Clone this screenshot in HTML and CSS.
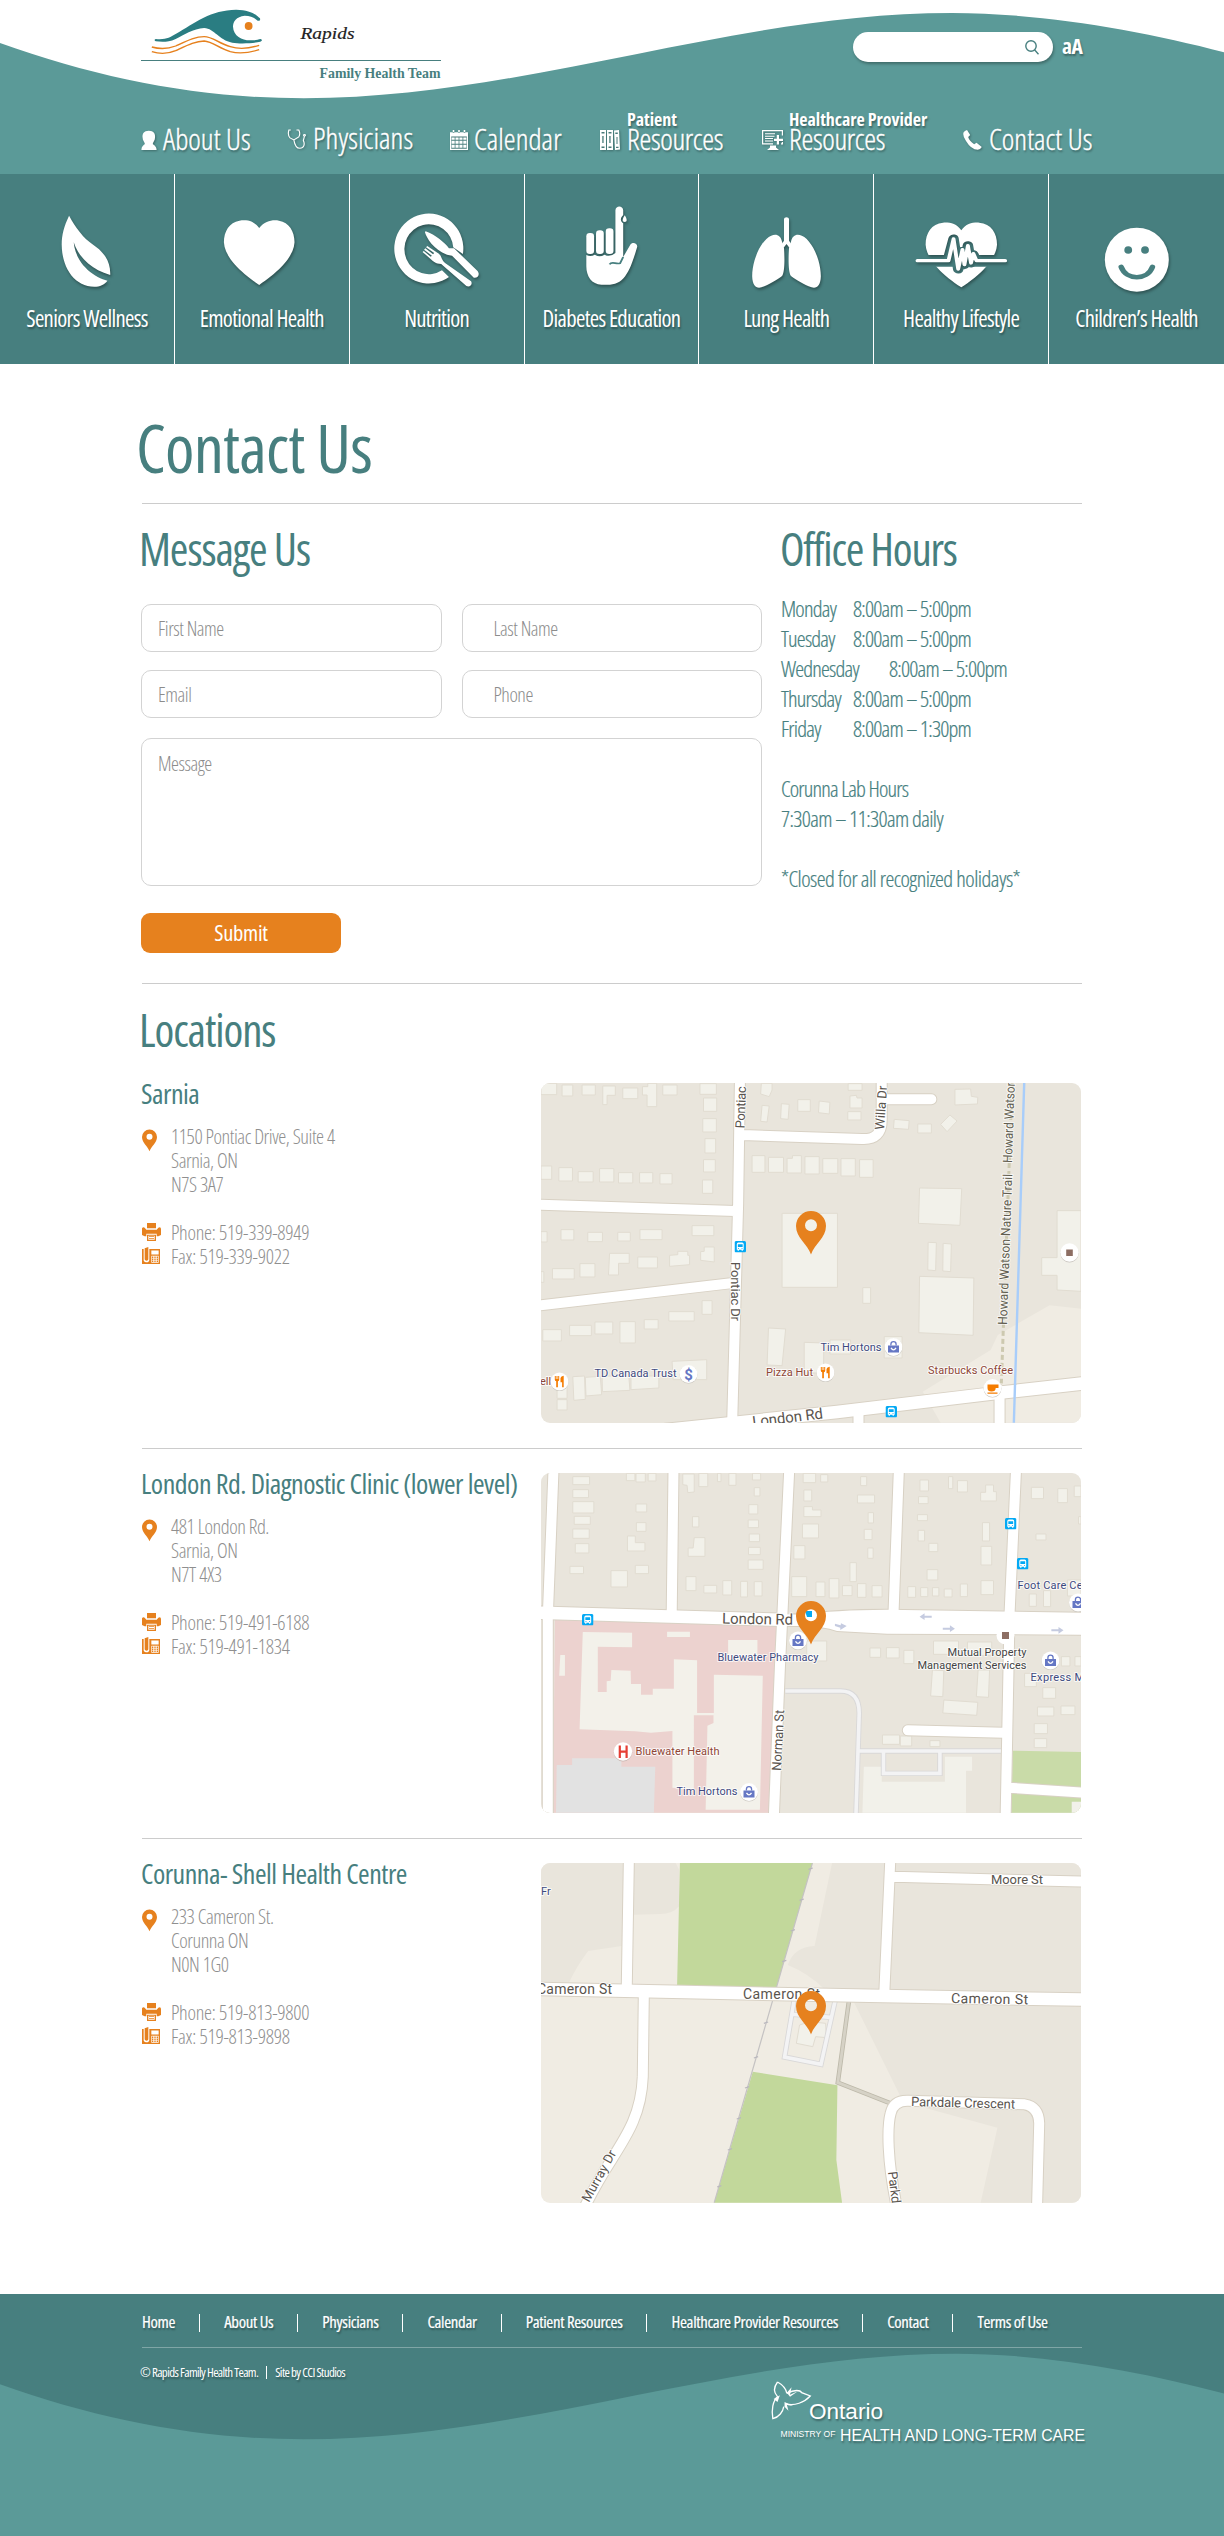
FILE: index.html
```
<!DOCTYPE html>
<html lang="en">
<head>
<meta charset="utf-8">
<title>Contact Us - Rapids Family Health Team</title>
<link rel="stylesheet" href="styles.css">
</head>
<body>
<svg class="defs" width="0" height="0" aria-hidden="true">
  <defs>
    <symbol id="pin" viewBox="0 0 30 44"><path fill-rule="evenodd" d="M15 43.500C11.500 33 0 27 0 15A15 15 0 0 1 30 15C30 27 18.500 33 15 43.500ZM15 8.300a6 6 0 1 0 0 12a6 6 0 1 0 0-12Z"/></symbol>
    <symbol id="printer" viewBox="0 0 57 54" preserveAspectRatio="none"><path d="M15 0h27v16H15zM0 16q3-5 8-2l5 6h31l5-6q8-3 8 4v18l-8 4h-5v-8H13v8H8l-8-4zM15 35h27v19H15zM19 38v12h19V38z" fill-rule="evenodd"/><path d="M21 40h15v2H21zM21 45h15v2H21z"/></symbol>
    <symbol id="fax" viewBox="0 0 54 50" preserveAspectRatio="none"><path fill-rule="evenodd" d="M0 6h5v34q2 6 8 5h4q4-1 5-6V6h32v44H0zM28 10v12h22V10zM28 26v20h22V26z"/><path d="M8 4l11-4v37q-5 7-11 0zM30 28h4v4h-4zM37 28h4v4h-4zM44 28h4v4h-4zM30 34h4v4h-4zM37 34h4v4h-4zM44 34h4v4h-4zM30 40h4v4h-4zM37 40h4v4h-4zM44 40h4v4h-4z"/></symbol>
    <symbol id="bus" viewBox="0 0 11 11"><rect width="11" height="11" rx="1.500" fill="#03a9f4"/><path fill="#fff" fill-rule="evenodd" d="M2.200 3q0-1.500 1.500-1.500h3.600q1.500 0 1.500 1.500v5.300h-.8v1H6.800v-1H4.200v1H3v-1h-.8zM3.200 3v2.700h4.600V3zM3.300 6.600v.9h1v-.9zM6.700 6.600v.9h1v-.9z"/></symbol>
    <symbol id="bag" viewBox="0 0 18 20"><circle cx="9" cy="10.600" r="9" fill="#c9c5be"/><circle cx="9" cy="10" r="9" fill="#fff"/><path d="M3.500 8.500h11v7h-11z" fill="#6577c4"/><path d="M6.400 8.500V7.300a2.600 2.600 0 0 1 5.200 0v1.200" fill="none" stroke="#6577c4" stroke-width="1.300"/><path d="M6.500 10.800q2.500 4 5 0" fill="none" stroke="#fff" stroke-width="1.300"/></symbol>
    <symbol id="food" viewBox="0 0 18 20"><circle cx="9" cy="10.600" r="9" fill="#c9c5be"/><circle cx="9" cy="10" r="9" fill="#fff"/><path d="M4.300 4.500h1v3h.7v-3h1v3h.7v-3h1v3.700q0 1.300-1.300 1.600v6H5.700v-6Q4.300 9.500 4.300 8.200zM10 6.500q.5-2 3.200-2.200v11.500h-1.600v-5H10z" fill="#f57c00"/></symbol>
  </defs>
</svg>

<header class="header">
  <svg class="header-wave" viewBox="0 0 1224 174" aria-hidden="true"><path d="M0 43C100 79 200 98.300 304 98.300C525 98.300 731 13 952 13C1040 13 1140 30 1224 52.300V174H0Z" fill="#5b9a98"/></svg>
  <div class="header-content">
    <div class="header-top">
      <svg class="logo" viewBox="141 0 300 86" role="img" aria-label="Rapids Family Health Team">
        <g transform="scale(.39032 .33333)">
          <path fill="#2a7d82" d="M399 117C425 120 435 112 450 102C500 68 540 30 605 29C640 30 655 42 666 55C668 61 664 64 660 62C650 52 642 47 627 47C605 50 597 65 597 80C598 108 620 121 640 121C655 121 660 119 668 117C672 119 672 124 667 125C650 130 615 132 595 128C560 120 550 86 523 84C495 86 470 105 450 117C430 128 412 126 399 124C395 122 395 118 399 117Z"/>
          <ellipse cx="637" cy="78" rx="10" ry="12" fill="#e6811e"/>
          <path fill="none" stroke="#e6811e" stroke-width="4" d="M389 141C410 148 430 147 450 138C480 122 500 110 523 110C545 110 560 130 590 140C615 149 640 145 664 136M389 155C410 163 430 162 450 152C480 136 500 124 523 123C545 125 560 144 590 155C615 163 640 158 664 149"/>
        </g>
        <path d="M141 60.500H441" stroke="#477f7f"/>
        <text class="logo-name" x="300.500" y="38.700" textLength="54" lengthAdjust="spacingAndGlyphs">Rapids</text>
        <text class="logo-sub" x="319.500" y="77.700" textLength="121" lengthAdjust="spacingAndGlyphs">Family Health Team</text>
      </svg>
      <div class="search">
        <svg width="14" height="15" viewBox="0 0 14 15" fill="none" stroke="#477f7f" stroke-width="1.400"><circle cx="6" cy="6" r="5.200"/><path d="M9.500 9.800L13.500 14.200"/></svg>
      </div>
      <span class="text-size">aA</span>
    </div>
    <nav class="nav">
      <a class="nav-item">
        <svg class="ico" width="16" height="20" viewBox="360 390 41 60" preserveAspectRatio="none"><path d="M380 392C393 392 397 402 396 412C396 422 391 426 390 432C394 436 400 440 400 450H361C361 440 366 436 370 432C369 426 364 422 364 412C363 402 367 392 380 392Z"/></svg>
        <span class="nav-label">About Us</span>
      </a>
      <a class="nav-item physicians">
        <svg class="ico line" width="19" height="20" viewBox="734 389 50 61" preserveAspectRatio="none"><path d="M744 392H739Q735 408 742 416L752 422L765 413Q770 404 765 392H759M752 422C754 436 760 448 768 448C778 448 782 436 777 424L780 411"/><circle cx="780" cy="408" r="2.500"/></svg>
        <span class="nav-label">Physicians</span>
      </a>
      <a class="nav-item">
        <svg class="ico" width="18" height="20" viewBox="1153 389 46 61" preserveAspectRatio="none"><path fill-rule="evenodd" d="M1153 396H1199V450H1153ZM1156 409V446H1196V409ZM1160 389h4v9h-4zM1174 389h4v9h-4zM1188 389h4v9h-4z"/><path d="M1157 412h8v7h-8zM1167 412h8v7h-8zM1177 412h8v7h-8zM1187 412h8v7h-8zM1157 422h8v9h-8zM1167 422h8v9h-8zM1177 422h8v9h-8zM1187 422h8v9h-8zM1157 434h8v9h-8zM1167 434h8v9h-8zM1177 434h8v9h-8zM1187 434h8v9h-8z"/></svg>
        <span class="nav-label">Calendar</span>
      </a>
      <a class="nav-item">
        <svg class="ico" width="20" height="20" viewBox="0 0 20 20"><path fill-rule="evenodd" d="M0 0h6v20H0zM1.500 2v1.500h3V2zM2.300 6v7h1.300V6zM1.500 16.500v1.500h3v-1.500zM7 0h6v20H7zM8.500 2v1.500h3V2zM9.300 6v7h1.300V6zM8.500 16.500v1.500h3v-1.500zM14 .5l5-.5 1 19.500-5 .5zM15.300 2.500v1.500h2.500v-1.500zM16.500 7v7h1V7zM16 16.800v1.200h2.500v-1.200z"/></svg>
        <span class="nav-label resources"><b>Patient</b>Resources</span>
      </a>
      <a class="nav-item provider">
        <svg class="ico" width="21" height="20" viewBox="0 0 21 20"><path d="M0 0h21v5.500h-1.200V1.200H1.200v12H11v1.300H0zM21 12v2.500h-2v-1.300h.8V12zM3 3.300h10v1H3zM3 5.700h9.500v1H3zM3 8.100h8v1H3zM3 10.500h8v1H3zM14.800 5h2.200v3.700h4v2.200h-4v3.600h-2.200v-3.600H12V8.700h2.800zM8 15.500h6v2l3 2.500H5l3-2.500z"/></svg>
        <span class="nav-label resources"><b>Healthcare Provider</b>Resources</span>
      </a>
      <a class="nav-item contact-link">
        <svg class="ico" width="19" height="20" viewBox="0 0 19 20"><path d="M.5 2.500Q1.500.5 4 0l3.200 5-2 2q1 4 6 7.200l2.300-1.400L18.800 17q-1.500 2.500-4 2.800Q8 19.500 3 11-.500 6 .5 2.500Z"/></svg>
        <span class="nav-label">Contact Us</span>
      </a>
    </nav>
  </div>
</header>

<nav class="services">
  <a class="service">
    <svg viewBox="0 100 448 280" preserveAspectRatio="none"><path d="M178 138C165 170 159 195 159 225C160 300 195 351 243 351C258 351 268 345 277 333C245 325 195 285 190 218C202 262 235 300 284 316C286 270 262 242 240 225C215 205 195 175 178 138Z"/></svg>
    <span>Seniors Wellness</span>
  </a>
  <a class="service">
    <svg viewBox="448 100 448 280" preserveAspectRatio="none"><path d="M665 175C650 152 632 150 614 153C588 158 574 185 574 218C576 265 620 310 665 346C710 310 754 265 756 218C756 185 742 158 716 153C698 150 680 154 665 175Z"/></svg>
    <span>Emotional Health</span>
  </a>
  <a class="service">
    <svg viewBox="895 100 448 280" preserveAspectRatio="none"><path d="M1186 253A89 105 0 1 0 1150 322L1132 302A63 75 0 1 1 1161 233Z"/><path d="M1090 185C1115 195 1140 220 1150 236L1163 236L1223 303C1231 313 1225 326 1214 324L1158 258L1145 255C1110 240 1092 205 1088 187Z"/><path d="M1082 247L1085 244L1103 261L1106 258L1086 240L1089 236L1109 254L1112 250L1091 233L1094 229L1124 252C1132 260 1130 270 1140 280L1207 335C1212 345 1203 354 1195 349L1130 283C1115 282 1110 275 1102 267Z"/></svg>
    <span>Nutrition</span>
  </a>
  <a class="service">
    <svg viewBox="1343 100 448 280" preserveAspectRatio="none"><rect x="1501" y="190" width="20" height="63" rx="9" ry="10"/><rect x="1526" y="182" width="20" height="71" rx="9" ry="10"/><rect x="1551" y="176" width="20" height="77" rx="9" ry="10"/><path d="M1501 256Q1512 262 1523 255Q1535 264 1548 255Q1562 264 1576 250V122C1577 107 1595 107 1596 122V136C1588 145 1588 155 1596 161V262L1614 226C1620 215 1634 222 1632 232C1615 300 1600 343 1562 345H1540C1515 345 1501 320 1501 290Z"/><path d="M1600 137C1607 150 1606 157 1600 157C1593 157 1593 150 1600 137Z"/><path d="M1561 284C1566 274 1577 284 1588 281L1596 262" fill="none" stroke="#477f7f" stroke-width="5"/></svg>
    <span>Diabetes Education</span>
  </a>
  <a class="service">
    <svg viewBox="224 100 448 280" preserveAspectRatio="none"><path d="M443 149C443 141 456 141 456 149V213L463 225L457 234L449.500 223L442 234L436 225L443 213Z"/><path id="lobe" d="M438 216C434 197 424 192 410 198C385 210 361 270 361 320C362 350 372 357 385 353C405 345 425 330 438 319C445 310 445 265 443 235Z"/><use href="#lobe" transform="matrix(-1 0 0 1 899 0)"/></svg>
    <span>Lung Health</span>
  </a>
  <a class="service">
    <svg viewBox="672 100 448 280" preserveAspectRatio="none"><mask id="pulse-gap"><rect x="672" y="100" width="448" height="280" fill="#fff"/><path d="M780 256H1010V291H780Z" fill="#000"/><path d="M862 273L877 208L889 298L900 245L905 285L914 228L922 280L928 255L936 275" fill="none" stroke="#000" stroke-width="27" stroke-linejoin="round"/></mask><path mask="url(#pulse-gap)" d="M897 182C885 162 868 158 850 159C820 162 805 190 805 225C808 272 850 318 897 353C944 318 986 272 989 225C989 190 974 162 943 159C926 158 909 162 897 182Z"/><path d="M784 273H864L877 208L889 298L900 240L905 285L914 228L922 280L928 252L936 273H1010" fill="none" stroke="#fff" stroke-width="10" stroke-linejoin="round" stroke-linecap="round"/></svg>
    <span>Healthy Lifestyle</span>
  </a>
  <a class="service">
    <svg viewBox="1120 100 448 280" preserveAspectRatio="none"><ellipse cx="1345" cy="270" rx="82" ry="96"/><g fill="#477f7f"><ellipse cx="1323" cy="241" rx="10" ry="11.500"/><ellipse cx="1366" cy="241" rx="10" ry="11.500"/></g><path d="M1305 292C1318 333 1372 333 1385 292" fill="none" stroke="#477f7f" stroke-width="14" stroke-linecap="round"/></svg>
    <span>Children’s Health</span>
  </a>
</nav>

<main class="main">
  <h1>Contact Us</h1>
  <section class="contact">
    <form class="form">
      <h2>Message Us</h2>
      <div class="fields">
        <input class="field" placeholder="First Name">
        <input class="field indent" placeholder="Last Name">
        <input class="field" placeholder="Email">
        <input class="field indent" placeholder="Phone">
      </div>
      <textarea class="field message" placeholder="Message"></textarea>
      <button class="submit" type="button">Submit</button>
    </form>
    <aside class="hours">
      <h2>Office Hours</h2>
      <pre class="hours-list">Monday	8:00am – 5:00pm
Tuesday	8:00am – 5:00pm
Wednesday	8:00am – 5:00pm
Thursday	8:00am – 5:00pm
Friday	8:00am – 1:30pm

Corunna Lab Hours
<span class="lab">7:30am – 11:30am daily</span>

<span class="closed">*Closed for all recognized holidays*</span></pre>
    </aside>
  </section>

  <section class="locations">
    <h2>Locations</h2>

    <article class="location">
      <div class="details">
        <h3>Sarnia</h3>
        <p class="row"><svg class="pin-icon" width="15" height="23"><use href="#pin"/></svg><span>1150 Pontiac Drive, Suite 4<br>Sarnia, ON<br>N7S 3A7</span></p>
        <p class="row phone"><svg width="19" height="18"><use href="#printer"/></svg><span>Phone: 519-339-8949</span></p>
        <p class="row phone"><svg width="18" height="17"><use href="#fax"/></svg><span>Fax: 519-339-9022</span></p>
      </div>
      <svg class="map" viewBox="0 0 540 340">
        <rect width="540" height="340" fill="#e9e5dc"/>
        <g transform="scale(.35714 .33333) translate(-31 -39)">
          <path fill="#f0ece3" d="M1455 706L1543 716V1058H1150L1100 965L1290 840L1310 795Z"/>
          <path class="bld" d="M31 40h44v34h-44zM90 45h30v33h-30zM146 45h37v30h-37zM204 48h35v28h-23v28h-12zM260 54h42v32h-42zM315 50h15v-10h25v70h-27v-35h-13zM372 45h40v30h-40zM476 41h46v32h-46zM486 84h37v40h-37zM484 146h38v40h-38zM490 206h30v43h-30zM486 269h33v37h-33zM483 330h29v40h-29zM31 288h30v40h-30zM81 293h38v40h-38zM135 305h42v31h-42zM195 296h40v40h-40zM248 308h40v31h-40zM307 308h37v31h-37zM364 311h34v31h-34z"/>
          <path class="bld" d="M648 40h30v20l-8 20-24-8zM750 89h35v35h-35zM704 101l22 2-3 45-21-2zM810 93l30 4-2 35-30-4zM650 106l20 2-6 48-18-2zM891 41h39v20h-39zM896 78l18-2 2 8h14v30h-34zM890 125h37v25h-37zM1190 58l44-1 2 22 18 3-1 20-63 3zM1020 148l42 4-2 26-42-3zM1086 162h38v27h-38zM1150 163l26-28 20 18-28 32z"/>
          <path class="bld" d="M622 257h36v50h-36zM668 262h42v45h-42zM720 265h15v-8h25v52h-40zM770 260h40v52h-40zM820 266h42v44h-42zM871 266h40v52h-40zM923 269h38v53h-38zM1091 354l118 2-5 110-116-6zM706 430h155v222h-155zM1115 517l23 1-2 84-22-2zM1157 520l23 2-2 83-22-2zM932 653h22v47h-22zM1091 619l152 5-2 172-152-8zM1476 422h67v242l-67-4v-44h-43v-53h43z"/>
          <path class="bld" d="M31 485h17v31h-17zM87 479h36v31h-36zM162 487h41v28h-41zM246 487h35v26h-35zM308 479h62v30h-62zM454 467h61v30h-61zM31 605h8v32h-8zM63 596h61v31h-61zM140 581h42v40h-42zM223 550h55v30h-30v35h-28zM302 561h55v33h-55zM391 556l23-2v-10h28v12h5v28l-56 5zM478 545l10-1v-13h28v45l-38-5zM36 779h52v34h-52zM111 766h61v31h-61zM182 756h50v36h-50zM252 755h43v64h-43zM320 749h39v28h-39zM389 725h71v28h-71zM482 692h28v41h-28z"/>
          <path class="bld" d="M120 920l33-2 2 70-32 3zM155 922l42-3 4 55-44 4zM202 918l75 1 3 42-77 4zM283 918h78v36l-78 5zM398 874l97-5v60h-94zM76 935h28v50h-28zM76 989h28v31h-28zM668 774l48 3-10 110-42-2zM768 817l55 2-1 90h-54zM840 810h58v42h-58zM992 800h50v64h-50z"/>
          <g class="roads casing"><path d="M588 30L583 400L566 1070M20 404L575 423M20 707L575 638M595 195L930 207Q985 210 985 150V30M985 88H1124M1315 960V1070M920 1020V1070"/><path class="main-road" d="M380 1080L860 1026L1300 970L1550 940"/></g>
          <g class="roads"><path d="M588 30L583 400L566 1070M20 404L575 423M20 707L575 638M595 195L930 207Q985 210 985 150V30M985 88H1124M1315 960V1070M920 1020V1070"/><path class="main-road" d="M380 1080L860 1026L1300 970L1550 940"/></g>
          <path class="line" d="M1384 39L1355 1058" stroke="#a8cdfa" stroke-width="2.400"/>
          <path class="line" d="M1350 39L1320 940" stroke="#cdc9b0" stroke-width="3" stroke-dasharray="5 3"/>
        </g>
        <g class="lbl">
          <text class="st" transform="translate(203.500 45.500) rotate(-88)" textLength="42">Pontiac</text>
          <text class="st" transform="translate(190 179) rotate(90)" textLength="59">Pontiac Dr</text>
          <text class="st" transform="translate(343 47) rotate(-86)" textLength="44">Willa Dr</text>
          <text class="trail" transform="translate(466 242) rotate(-88)" textLength="151" lengthAdjust="spacingAndGlyphs">Howard Watson Nature Trail</text>
          <text class="trail" transform="translate(471 80) rotate(-88)" textLength="83" lengthAdjust="spacingAndGlyphs">Howard Watson</text>
          <text class="st big" transform="translate(212 344) rotate(-7)" textLength="71">London Rd</text>
          <text class="poi" x="53.500" y="294" textLength="82">TD Canada Trust</text>
          <text class="poi" x="279.500" y="268" textLength="61">Tim Hortons</text>
          <text class="eat" x="225" y="293" textLength="47">Pizza Hut</text>
          <text class="eat" x="387" y="291" textLength="85">Starbucks Coffee</text>
          <text class="eat" x="-1" y="302">ell</text>
        </g>
        <use href="#bus" x="193.500" y="158" width="11.500" height="11.500"/><use href="#bus" x="344.500" y="323" width="11.500" height="11.500"/>
        <use href="#bag" x="343.500" y="254" width="18" height="20"/>
        <use href="#food" x="275.500" y="279.500" width="18" height="20"/><use href="#food" x="9.500" y="288.500" width="18" height="20"/>
        <circle cx="147.500" cy="291.600" r="9" fill="#c9c5be"/><circle cx="147.500" cy="291" r="9" fill="#fff"/><text class="dollar" x="143.200" y="297">$</text>
        <circle cx="528.500" cy="170.200" r="9.200" fill="#c9c5be"/><circle cx="528.500" cy="169.500" r="9.200" fill="#fff"/><path d="M525.200 166.500h6.600v6.600h-6.600z" fill="#8d6e63"/>
        <circle cx="451.500" cy="305.600" r="9" fill="#c9c5be"/><circle cx="451.500" cy="305" r="9" fill="#fff"/><path d="M446.500 301.500h11v3.500h-2.800q0 3.500-4.200 3.500-4 0-4-3.500zM446.500 309.500h10v1.300h-10z" fill="#f57c00"/>
        <use href="#pin" class="marker" x="255" y="128" width="30" height="44"/>
      </svg>
    </article>

    <article class="location">
      <div class="details">
        <h3>London Rd. Diagnostic Clinic (lower level)</h3>
        <p class="row"><svg class="pin-icon" width="15" height="23"><use href="#pin"/></svg><span>481 London Rd.<br>Sarnia, ON<br>N7T 4X3</span></p>
        <p class="row phone"><svg width="19" height="18"><use href="#printer"/></svg><span>Phone: 519-491-6188</span></p>
        <p class="row phone"><svg width="18" height="17"><use href="#fax"/></svg><span>Fax: 519-491-1834</span></p>
      </div>
      <svg class="map" viewBox="0 0 540 340">
        <rect width="540" height="340" fill="#e9e5dc"/>
        <g transform="scale(.35714 .33333) translate(-31 -39)">
          <path fill="#ecd2cf" d="M70 480L695 498L672 1058H65Z"/>
          <path fill="#e2e2e2" d="M75 915h43v-20h138v25h95l-4 138H73z"/>
          <path fill="#f3f1ea" d="M148 516l138 2v44l-96-2v136h25v-32l11-2 2-32 54 2 1 40h28v32h33v-18h59v-88l65 3v158h47v-115l137 3-8 402h-152l5-252 17-8v-23h-55v225l-60-8v-170l-60 5-45-4-155-6zM384 515h64v16h-64zM555 540h82v60h-82zM85 585h13v62h-16z"/>
          <path fill="#c9dba8" d="M1352 872L1543 876V1058H1348Z"/>
          <path class="bld" d="M120 50h47v24h-47zM120 89h44v24h-44zM120 125h59v34h-59zM124 169h45v24h-45zM120 207h46v28h-46zM127 251h38v28h-38zM112 319h38v22h-38zM227 332h46v49h-46zM297 132h30v24h-30zM298 188h27v26h-27zM273 228h22v20h27v25h-49zM295 316h37v25h-37zM270 40h24v22h-24zM297 40h26v26h-26zM331 40h22v23h-22zM428 42h32v54l-18 2-2-22-12-2zM473 40h25v40h-25zM525 40h10v25h-10zM557 40h20v36h-20zM623 40h23v20h-23zM628 83h16v25h-16zM613 134h25v28h-25zM611 180h29v23h-29zM614 222h29v23h-29zM612 262h33v22h-33zM611 300h42v28h-42zM455 170h18v31h-18zM460 233h30v56h-47v-25h14zM437 350h28v42h-28zM487 376h36v23h-36zM540 362h25v43h-25zM590 364h19v47h-19zM628 365h22v43h-22z"/>
          <path class="bld" d="M765 40h35v28h-35zM814 44h20v22h-20zM926 50h17v27h-17zM917 105h48v24h-48zM767 90h22v33h-22zM767 140h24v10h24v20h-48zM763 192h45v42h-45zM947 158h15v31h-15zM936 208h22v31h-22zM946 264h15v31h-15zM739 257h31v40h-31zM896 308h18v57h-18zM733 350h42v60h-42zM801 366h25v44h-25zM838 356h27v58h-27zM875 377h27v30h-27zM917 371h24v41h-24zM958 377h28v34h-28zM1092 60h24v33h-24zM1088 110h27v21h-27zM1172 50h12v36h-12zM1197 62h28v34h-28zM1262 97h14v-22h22v20h8v28h-44zM1085 164h28v18h-28zM1087 211h18v32h-18zM1117 250h25v25h-25zM1267 188h20v55h-20zM1263 259h30v56h-30zM1112 329h30v31h-30zM1263 362h35v42h-35zM1058 380h22v32h-22zM1094 383h20v27h-20zM1127 383h18v25h-18zM1160 387h22v24h-22zM1205 372h20v38h-20zM1404 82h34v34h-34zM1478 86h27v42h-27zM1524 78h19v32h-19zM1417 222h28v18h-28zM1536 170h7v22h-7zM1398 402h20v37h-20zM1438 392h20v48h-20zM1505 360h38v48h-38z"/>
          <path class="bld" d="M775 543h56v60h-56zM952 564h30v28h-30zM998 563h36v31h-36zM1047 571h28v40h-28zM1130 543h70v40h-70zM1225 546h68v40h-68zM1127 630l32 2-3 78-34-2zM1255 630h32l-3 82-34-2zM1159 720l95 7-3 39-95-7zM987 825h48v28h-48zM1037 828h32v30h-32zM1120 842h28v18h-28zM1385 640h33v40h-33zM1436 683h36v32h-36zM1421 741h46v27h-46zM1487 738h39v26h-39zM1412 791h37v30h-37zM1412 836h35v27h-35zM1488 590h24v28h-24zM1526 590h17v28h-17z"/>
          <path fill="#f2f1ea" d="M935 920h50v45h177v-75h76v42h-17v126h-290zM1517 1025h26v33h-26z"/>
          <g class="lanes casing"><path d="M715 693H870Q922 693 922 760L913 1060M922 873H1322M990 873V940H1148V873"/></g>
          <g class="lanes"><path d="M715 693H870Q922 693 922 760L913 1060M922 873H1322M990 873V940H1148V873"/></g>
          <g class="roads casing"><path d="M66 30L50 470V1070M402 30L397 460M726 30L700 620L683 1070M1033 30L1018 460M1361 30L1343 460L1332 1070M1325 818L1058 811M1340 983L1550 998"/><path class="main-road" d="M20 458L700 479"/></g>
          <path fill="#d8d1c4" d="M735 459L760 461Q850 446 1000 446L1550 455V527L1000 524L860 516Q820 501 760 501L715 501Z"/>
          <g class="roads"><path d="M66 30L50 470V1070M402 30L397 460M726 30L700 620L683 1070M1033 30L1018 460M1361 30L1343 460L1332 1070M1325 818L1058 811M1340 983L1550 998"/><path class="main-road" d="M20 458L700 479"/></g>
          <path fill="#fff" d="M690 462L760 464Q850 450 1000 449L1550 458V524L1000 521L860 513Q820 498 760 498L690 498Z"/>
          <path fill="#c5cbe0" d="M1091 470l14-10v7h20v6h-20v7zM1190 506l-14-10v7h-20v6h20v7zM1494 511l-14-10v7h-20v6h20v7zM887 498l-16-8-1 6-16-5v7l15 5v7z"/>
        </g>
        <g class="lbl">
          <text class="st big" x="181" y="150.500" textLength="71" transform="rotate(1 181 150)">London Rd</text>
          <text class="st" transform="translate(240 298) rotate(-87)" textLength="61">Norman St</text>
          <text class="poi" x="176.500" y="188" textLength="101">Bluewater Pharmacy</text>
          <text class="poi" x="135.500" y="322" textLength="61">Tim Hortons</text>
          <text class="eat" x="94.500" y="282" textLength="84">Bluewater Health</text>
          <text class="poi" x="476.500" y="116" textLength="75">Foot Care Cent</text>
          <text class="poi" x="489.500" y="208" textLength="60">Express Ma</text>
          <text class="biz" x="406.500" y="183" textLength="79">Mutual Property</text>
          <text class="biz" x="376.500" y="196" textLength="109">Management Services</text>
        </g>
        <use href="#bus" x="41" y="141" width="11.500" height="11.500"/><use href="#bus" x="464" y="45" width="11.500" height="11.500"/><use href="#bus" x="476" y="85" width="11.500" height="11.500"/>
        <use href="#bag" x="248" y="157.500" width="18" height="20"/><use href="#bag" x="199" y="309" width="18" height="20"/><use href="#bag" x="500.500" y="177.500" width="18" height="20"/><use href="#bag" x="528" y="119.500" width="18" height="20"/>
        <circle cx="82" cy="279.200" r="9.200" fill="#c9b5b0"/><circle cx="82" cy="278.500" r="9.200" fill="#fff"/><path d="M77.700 272.500h2.200v5h4.600v-5h2.200v12.500h-2.200v-5.300h-4.600v5.300h-2.200z" fill="#e53f35"/>
        <circle cx="464.500" cy="162.500" r="9" fill="#fff"/><path d="M461 159h7v7h-7z" fill="#8d6e63"/>
        <circle cx="270" cy="142" r="7" fill="#fff"/><path d="M264 138h7v6h-5z" fill="#03a9f4"/>
        <use href="#pin" class="marker" x="255" y="128" width="30" height="44"/>
      </svg>
    </article>

    <article class="location">
      <div class="details">
        <h3>Corunna- Shell Health Centre</h3>
        <p class="row"><svg class="pin-icon" width="15" height="23"><use href="#pin"/></svg><span>233 Cameron St.<br>Corunna ON<br>N0N 1G0</span></p>
        <p class="row phone"><svg width="19" height="18"><use href="#printer"/></svg><span>Phone: 519-813-9800</span></p>
        <p class="row phone"><svg width="18" height="17"><use href="#fax"/></svg><span>Fax: 519-813-9898</span></p>
      </div>
      <svg class="map" viewBox="0 0 540 340">
        <rect width="540" height="340" fill="#f0ece3"/>
        <g transform="scale(.35714 .33333) translate(-31 -39)">
          <path fill="#e9e5dc" d="M31 39H262L257 288L163 303Q130 350 110 397L31 400ZM290 39H408L418 60V168Q400 192 365 192L290 194ZM846 39H995L980 418H825Q780 370 722 345Q740 290 797 288ZM1020 39H1543V1058H1262L1309 833L1110 775L1040 745L908 458L1005 440Z"/>
          <path fill="#c2d89b" d="M420 39H791L690 413L412 408ZM624 665L861 706L858 930L874 1058H516Z"/>
          <path class="line" d="M791 39L516 1058" stroke="#c4c2c2" stroke-width="1.200"/>
          <path class="line" d="M780 58l12-4M755 151l12-4M730 243l12-4M706 335l12-4M655 520l12-4M627 624l12-4M602 714l12-4M579 807l12-4M554 900l12-4M524 1011l12-4" stroke="#b9b7bd" stroke-width="1.200"/>
          <path class="bld" d="M755 525l28-10 45 5 2 43-30-3-8 30-46-10z"/>
          <g class="lanes casing"><path d="M740 450L713 621L815 643L855 450M738 493L843 502"/></g>
          <g class="lanes"><path d="M740 450L713 621L815 643L855 450M738 493L843 502"/></g>
          <path class="line" d="M893 455L862 698L1010 760" stroke="#bdb9aa" stroke-width="4.500"/><path class="line" d="M893 455L862 698L1010 760" stroke="#d6d2c6" stroke-width="2.800"/>
          <g class="roads casing"><path d="M277 30L271 420M319 425L316 680C310 850 220 910 150 1080M1009 30L992 435M1020 80L1550 95M1027 1070C1000 930 1000 830 1010 790Q1018 750 1060 752L1385 763Q1425 770 1426 820L1420 1070"/><path class="main-road" d="M20 417L600 430L1550 449"/></g>
          <g class="roads"><path d="M277 30L271 420M319 425L316 680C310 850 220 910 150 1080M1009 30L992 435M1020 80L1550 95M1027 1070C1000 930 1000 830 1010 790Q1018 750 1060 752L1385 763Q1425 770 1426 820L1420 1070"/><path class="main-road" d="M20 417L600 430L1550 449"/></g>
        </g>
        <g class="lbl">
          <text class="st mid" x="-4" y="131" textLength="75">Cameron St</text>
          <text class="st mid" x="202" y="136" textLength="77">Cameron St</text>
          <text class="st mid" x="410" y="140" textLength="77" transform="rotate(1 410 140)">Cameron St</text>
          <text class="st" x="450" y="21" textLength="52">Moore St</text>
          <text class="st" x="370" y="243" textLength="104" transform="rotate(1.500 370 243)">Parkdale Crescent</text>
          <text class="st" transform="translate(48 340) rotate(-61)" textLength="57">Murray Dr</text>
          <text class="st" transform="translate(347 309) rotate(83)" textLength="48">Parkdale</text>
          <text class="poi" x="0" y="32">Fr</text>
        </g>
        <use href="#pin" class="marker" x="255" y="128" width="30" height="44"/>
      </svg>
    </article>
  </section>
</main>

<footer class="footer">
  <svg class="footer-wave" viewBox="0 0 1224 242" aria-hidden="true"><path d="M0 90.300C100 126 200 145.300 304 145.300C525 145.300 735 59.700 956 59.700C1044 59.700 1140 77 1224 99.500V242H0Z" fill="#5b9a98"/></svg>
  <div class="footer-content">
    <nav class="footer-nav">
      <a>Home</a><i></i><a>About Us</a><i></i><a>Physicians</a><i></i><a>Calendar</a><i></i><a>Patient Resources</a><i></i><a>Healthcare Provider Resources</a><i></i><a>Contact</a><i></i><a>Terms of Use</a>
    </nav>
    <div class="footer-bottom">
      <p class="copyright"><span>© Rapids Family Health Team.</span><i></i><span>Site by CCI Studios</span></p>
      <svg class="ontario" width="316" height="66" viewBox="770 2380 316 66" role="img" aria-label="Ontario Ministry of Health and Long-Term Care">
        <g transform="translate(0 2280) scale(.78064 .33333)" fill="none" stroke="#fff">
          <path vector-effect="non-scaling-stroke" stroke-width="1.300" d="M996 306C990 325 992 340 996 350C990 362 988 390 990 416C998 412 1003 395 1004 380M996 306C1003 315 1007 328 1008 340M1008 340C1018 328 1025 330 1027 338L1038 348C1030 368 1018 378 1007 372"/>
          <path fill="#fff" stroke="none" d="M991 357L999 346L996 366ZM1008 338L1014 322L1012 344L1022 334L1012 350ZM1005 366L1016 378L1008 374L1010 392L1005 380Z"/>
        </g>
        <text x="809" y="2418.700" font-size="22.400" textLength="74" lengthAdjust="spacingAndGlyphs">Ontario</text>
        <text x="780.500" y="2437" font-size="9" textLength="55" lengthAdjust="spacingAndGlyphs">MINISTRY OF</text>
        <text x="840" y="2441.300" font-size="16" textLength="245" lengthAdjust="spacingAndGlyphs">HEALTH AND LONG-TERM CARE</text>
      </svg>
    </div>
  </div>
</footer>
</body>
</html>
```

FILE: styles.css
```
* { box-sizing: border-box; margin: 0; padding: 0; }

body {
  width: 1224px;
  background: #fff;
  color: #477f7f;
  font-family: "Open Sans", "Noto Sans", sans-serif;
  font-stretch: 75%;
}

.defs { display: block; }

/* Header */
.header, .footer { display: grid; }
.header { height: 174px; }
.header > *, .footer > * { grid-area: 1 / 1; }
.header-wave, .footer-wave { width: 100%; height: 100%; }
.header-content {
  display: flex;
  flex-direction: column;
  justify-content: space-between;
  padding: 0 0 20px 141px;
}
.header-top { display: flex; align-items: flex-start; }
.logo { width: 300px; height: 86px; overflow: visible; }
.logo-name { font: italic 17.500px "Liberation Serif", serif; fill: #222; stroke: #222; stroke-width: .2px; }
.logo-sub { font: bold 15.500px "Liberation Serif", serif; fill: #477f7f; }
.search {
  display: flex;
  align-items: center;
  justify-content: flex-end;
  width: 200px;
  height: 30px;
  margin: 32px 9px 0 412px;
  padding-right: 14px;
  border-radius: 15px;
  background: #fff;
  box-shadow: 1px 2px 3px rgba(0, 0, 0, .3);
}
.text-size {
  margin-top: 31px;
  font-size: 21.500px;
  font-weight: 700;
  line-height: 30px;
  letter-spacing: -.4px;
  color: #fff;
  text-shadow: 1px 2px 2px rgba(0, 0, 0, .35);
}

.nav {
  display: grid;
  grid-template-columns: 146px 163px 150px 162px 201px 150px;
  align-items: end;
}
.nav-item {
  display: flex;
  align-items: flex-end;
  gap: 6px;
  color: #fff;
  text-shadow: 1px 2px 2px rgba(0, 0, 0, .35);
}
.nav-item.physicians { gap: 7px; padding-bottom: 1px; }
.nav-item.contact-link { gap: 7px; }
.ico { margin-bottom: 4px; fill: #fff; filter: drop-shadow(1px 1px 1px rgba(0, 0, 0, .3)); }
.ico.line { fill: none; stroke: #fff; stroke-width: 3; }
.nav-label {
  display: flex;
  flex-direction: column;
  font-size: 30px;
  font-weight: 300;
  line-height: 30px;
  letter-spacing: 0;
  white-space: nowrap;
  -webkit-text-stroke: .35px #fff;
}
.nav-label.resources { margin-left: 1px; letter-spacing: -.35px; }
.provider .nav-label.resources { margin-left: 0; }
.nav-label b {
  margin-bottom: -4px;
  font-size: 18px;
  font-weight: 700;
  line-height: 18px;
  letter-spacing: -.05px;
  -webkit-text-stroke: 0;
}

/* Service tiles */
.services {
  display: grid;
  grid-template-columns: repeat(7, minmax(0, 1fr));
  height: 190px;
  background: #477f7f;
}
.service {
  display: flex;
  flex-direction: column;
  padding-top: 29px;
  border-right: 1px solid #fff;
  color: #fff;
  text-align: center;
  white-space: nowrap;
}
.service:last-child { border-right: 0; }
.service svg { width: 100%; height: 93.300px; fill: #fff; filter: drop-shadow(1px 2px 1.500px rgba(0, 0, 0, .35)); }
.service span {
  margin-top: 6.500px;
  padding-top: 1px;
  font-size: 22.800px;
  line-height: 30px;
  letter-spacing: -.7px;
  text-shadow: 1px 2px 2px rgba(0, 0, 0, .35);
}

/* Main column */
.main { width: 940px; height: 1930px; margin: 0 auto; padding-top: 48px; }
h1, h2, h3 { font-weight: 400; white-space: nowrap; }
h1 {
  margin: 0 0 21px -6px;
  font-size: 67px;
  line-height: 70px;
  letter-spacing: -.750px;
}
h2 { font-size: 45px; line-height: 50px; letter-spacing: -1.100px; }

.contact {
  display: grid;
  grid-template-columns: 639px 1fr;
  padding: 20px 0 30px;
  border-top: 1px solid #ccc;
  border-bottom: 1px solid #ccc;
}
.form { width: 621px; margin-left: -1px; }
.form h2 { margin-left: -2px; }
.locations h2 { margin-left: -3px; }
.fields {
  display: grid;
  grid-template-columns: 1fr 1fr;
  gap: 18px 20px;
  margin-top: 30px;
}
.field {
  display: block;
  width: 100%;
  height: 48px;
  padding: 0 15px 0 16px;
  border: 1px solid #d3d3d3;
  border-radius: 10px;
  background: #fff;
  font-family: inherit;
  font-size: 20px;
  font-stretch: 75%;
  font-weight: 300;
  letter-spacing: -.45px;
}
.field.indent { padding-left: 31px; }
.field::placeholder { color: #8c8c8c; opacity: 1; }
.field.message { height: 148px; margin-top: 20px; padding-top: 11px; line-height: 27px; resize: none; }
.submit {
  display: block;
  width: 200px;
  height: 40px;
  margin-top: 27px;
  border: 0;
  border-radius: 9px;
  background: #e6811e;
  color: #fff;
  font-family: inherit;
  font-size: 22.500px;
  font-stretch: 75%;
  line-height: 40px;
  letter-spacing: -.3px;
}
.hours h2 { margin-left: -1px; letter-spacing: -1.200px; }
.hours-list {
  margin-top: 20px;
  font-family: inherit;
  font-size: 22.400px;
  font-weight: 300;
  line-height: 30px;
  letter-spacing: -.8px;
  tab-size: 36px;
  -webkit-text-stroke: .2px #477f7f;
}
.hours-list .lab { letter-spacing: -.650px; }
.hours-list .closed { letter-spacing: -.520px; }

/* Locations */
.locations { padding-top: 21px; }
.locations h2 { margin-bottom: 4px; }
.location {
  display: grid;
  grid-template-columns: 399px 540px;
  height: 390px;
  padding-top: 17px;
  border-bottom: 1px solid #ccc;
}
.location:last-child { border-bottom: 0; }
.location h3 { margin: 0 0 14px -1px; font-size: 28px; line-height: 34px; letter-spacing: -.500px; }
.row {
  display: grid;
  grid-template-columns: 29px 1fr;
  margin-bottom: 24px;
  color: #8f8f8f;
  font-size: 20.300px;
  font-weight: 300;
  line-height: 24px;
  letter-spacing: -.450px;
}
.row.phone { margin-bottom: 0; letter-spacing: -.27px; }
.row svg { margin-top: 3px; fill: #e6811e; }
.row .pin-icon { margin-top: 5px; }
.map { width: 540px; height: 340px; margin-top: 7px; border-radius: 9px; }

.bld { fill: #f2f1ea; stroke: #e1dcd1; stroke-width: 1; vector-effect: non-scaling-stroke; }
.line { fill: none; vector-effect: non-scaling-stroke; }
.roads path { fill: none; stroke: #fff; stroke-width: 10px; stroke-linecap: round; vector-effect: non-scaling-stroke; }
.roads .main-road { stroke-width: 12.500px; }
.roads.casing path { stroke: #d8d1c4; stroke-width: 12px; }
.roads.casing .main-road { stroke-width: 14.500px; }
.lanes path { fill: none; stroke: #f3f3f4; stroke-width: 3.600px; vector-effect: non-scaling-stroke; }
.lanes.casing path { stroke: #d9d8d8; stroke-width: 5.400px; }
.lbl text {
  font-family: Roboto, sans-serif;
  font-stretch: 100%;
  font-size: 11px;
  paint-order: stroke;
  stroke: rgba(255, 255, 255, .75);
  stroke-width: 2px;
  stroke-linejoin: round;
}
.lbl .st { fill: #5a544e; font-size: 13px; }
.lbl .st.big { font-size: 15px; }
.lbl .st.mid { font-size: 14px; }
.lbl .trail { fill: #625e50; font-size: 13px; }
.lbl .poi { fill: #3e4a80; }
.lbl .eat { fill: #8e4636; }
.lbl .biz { fill: #444; }
.dollar { font: bold 15px Roboto, sans-serif; fill: #6577c4; }
.marker { fill: #e6811e; }

/* Footer */
.footer { height: 242px; background: #477f7f; }
.footer-content { width: 940px; margin: 0 auto; color: #fff; text-shadow: 1px 2px 2px rgba(0, 0, 0, .35); }
.footer-nav {
  display: flex;
  align-items: flex-end;
  gap: 24px;
  height: 54px;
  padding-bottom: 15px;
  border-bottom: 1px solid #7fa6a6;
  font-size: 16.800px;
  line-height: 20px;
  letter-spacing: -.330px;
  white-space: nowrap;
  -webkit-text-stroke: .2px #fff;
}
.footer-nav i { width: 1px; height: 18px; background: #fff; }
.footer-bottom { display: flex; align-items: flex-start; }
.copyright {
  display: flex;
  flex: none;
  align-items: center;
  gap: 8px;
  width: 628px;
  margin: 16px 0 0 -2px;
  font-size: 13px;
  line-height: 16px;
  letter-spacing: -.650px;
}
.copyright i { width: 1px; height: 13px; background: #fff; }
.ontario { flex: none; margin-top: 32px; margin-left: 2px; }
.ontario text { font-family: "Liberation Sans", Arial, sans-serif; fill: #fff; }
```
